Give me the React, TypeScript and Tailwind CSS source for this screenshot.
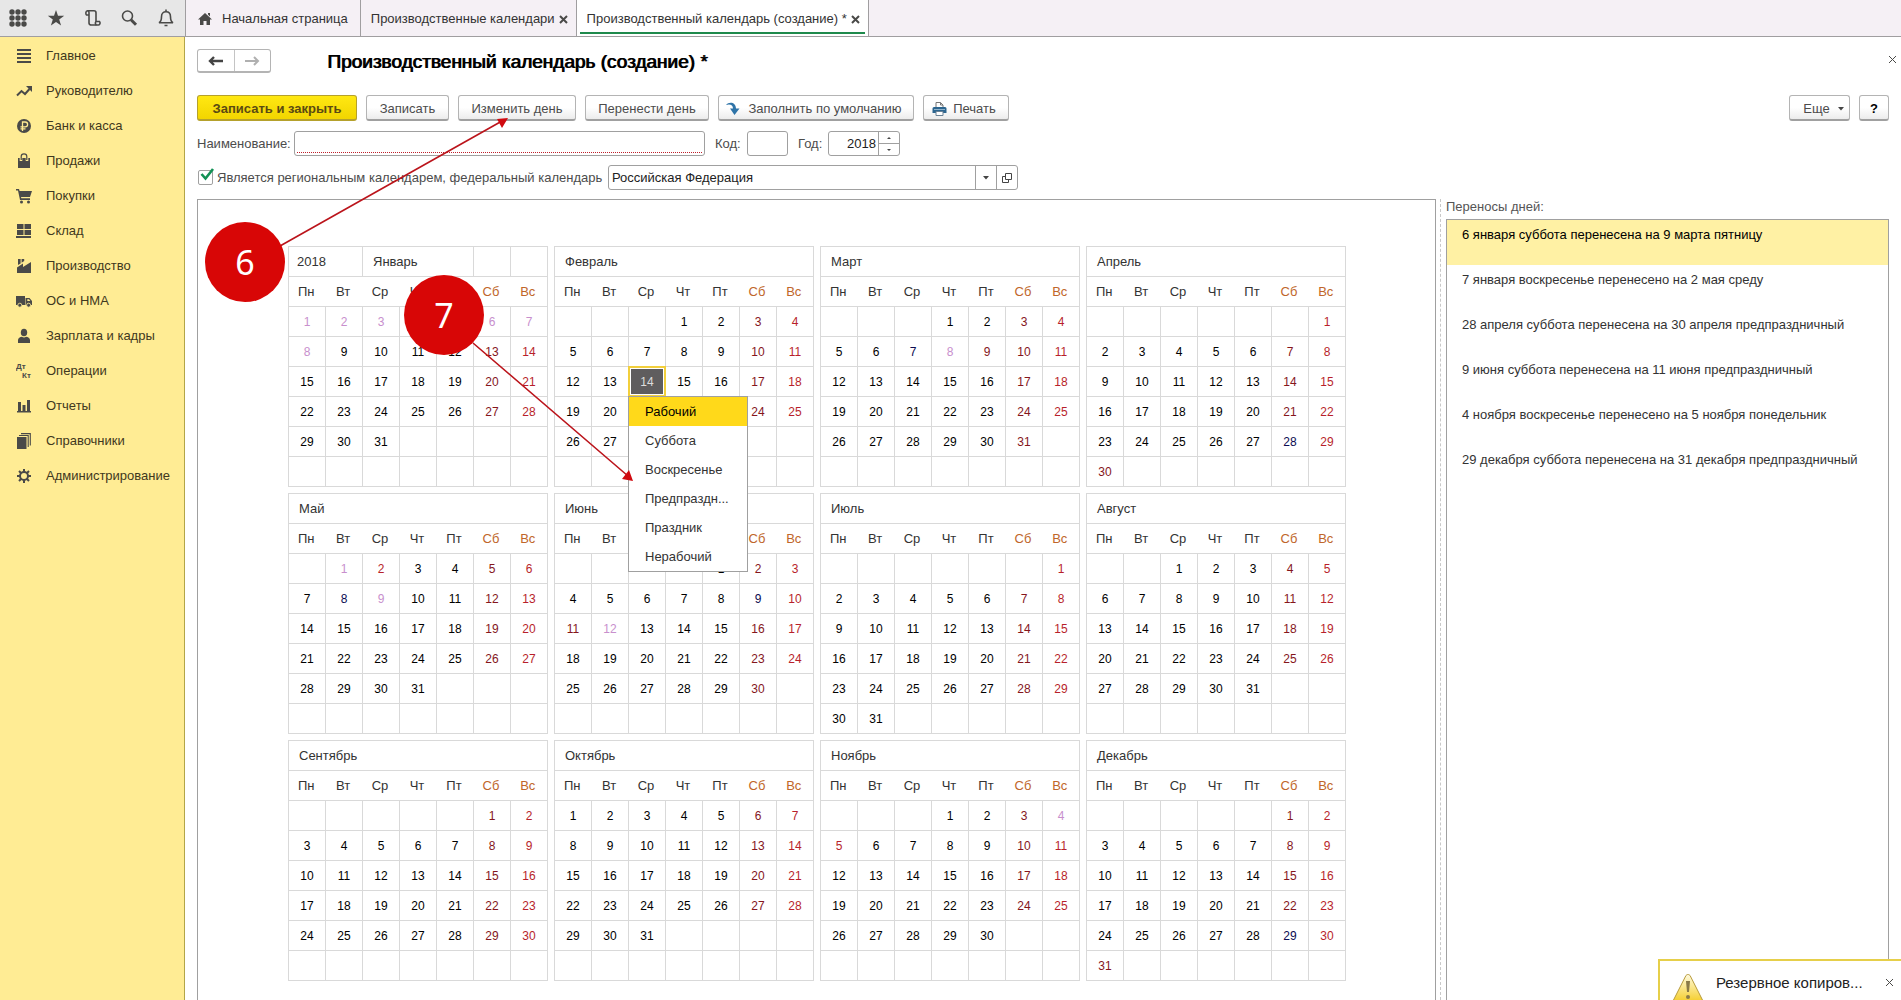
import React from "react";

const dark = "#4a4a48";

const WEEKDAYS = ["Пн", "Вт", "Ср", "Чт", "Пт", "Сб", "Вс"];

type Kind = "work" | "sat" | "sun" | "holiday" | "pre";

const KIND_CLASS: Record<Kind, string> = {
  work: "text-black",
  sat: "text-[#85161c]",
  sun: "text-[#b81f2b]",
  holiday: "text-[#c88fcd]",
  pre: "text-[#0c0c52]",
};

type Month = {
  name: string;
  start: number;
  days: number;
  special?: Record<number, Kind>;
  /** Days that lie under the open day menu and are not painted. */
  covered?: number[];
};

const MONTHS: Month[] = [
  {
    name: "Январь",
    start: 0,
    days: 31,
    special: { 1: "holiday", 2: "holiday", 3: "holiday", 4: "holiday", 5: "holiday", 6: "holiday", 7: "holiday", 8: "holiday" },
  },
  { name: "Февраль", start: 3, days: 28, special: { 22: "pre", 23: "holiday" }, covered: [21, 22, 23, 28] },
  { name: "Март", start: 3, days: 31, special: { 7: "pre", 8: "holiday", 9: "sat" } },
  { name: "Апрель", start: 6, days: 30, special: { 28: "pre", 30: "sat" } },
  { name: "Май", start: 1, days: 31, special: { 1: "holiday", 2: "sun", 8: "pre", 9: "holiday" } },
  { name: "Июнь", start: 4, days: 30, special: { 9: "pre", 11: "sat", 12: "holiday" } },
  { name: "Июль", start: 6, days: 31 },
  { name: "Август", start: 2, days: 31 },
  { name: "Сентябрь", start: 5, days: 30 },
  { name: "Октябрь", start: 0, days: 31 },
  { name: "Ноябрь", start: 3, days: 30, special: { 4: "holiday", 5: "sun" } },
  { name: "Декабрь", start: 5, days: 31, special: { 29: "pre", 31: "sat" } },
];

const TRANSFERS = [
  "6 января суббота перенесена на 9 марта пятницу",
  "7 января воскресенье перенесено на 2 мая среду",
  "28 апреля суббота перенесена на 30 апреля предпраздничный",
  "9 июня суббота перенесена на 11 июня предпраздничный",
  "4 ноября воскресенье перенесено на 5 ноября понедельник",
  "29 декабря суббота перенесена на 31 декабря предпраздничный",
];

const DAY_KINDS = ["Рабочий", "Суббота", "Воскресенье", "Предпраздн...", "Праздник", "Нерабочий"];

function Icon({ children, size = 16 }: { children: React.ReactNode; size?: number }) {
  return (
    <svg width={size} height={size} viewBox="0 0 16 16" fill={dark} aria-hidden="true" className="shrink-0">
      {children}
    </svg>
  );
}

const NAV: { label: string; icon: React.ReactNode }[] = [
  {
    label: "Главное",
    icon: <path d="M1 1h14v2H1zM1 5h14v2H1zM1 9h14v2H1zM1 13h14v2H1z" />,
  },
  {
    label: "Руководителю",
    icon: (
      <>
        <path d="M1 12.500l4.500-4.500 3.500 3 4.500-5" fill="none" stroke={dark} strokeWidth="2" />
        <path d="M10 3h6v6z" />
      </>
    ),
  },
  {
    label: "Банк и касса",
    icon: (
      <>
        <circle cx="8" cy="8" r="7" />
        <path d="M6.500 13V4h2.700a2.400 2.400 0 0 1 0 4.800H4.500M4.500 10.800h5" fill="none" stroke="#ffec94" strokeWidth="1.300" />
      </>
    ),
  },
  {
    label: "Продажи",
    icon: (
      <>
        <path d="M2 5h12v10H2z" />
        <path d="M5 8V3.500a3 2.700 0 0 1 6 0V8" fill="none" stroke="#ffec94" strokeWidth="2.600" />
        <path d="M5.200 7V3.500a2.800 2.600 0 0 1 5.600 0V7" fill="none" stroke={dark} strokeWidth="1.200" />
      </>
    ),
  },
  {
    label: "Покупки",
    icon: (
      <>
        <path d="M0 1h3l.6 2H16l-2 6H5l.3 1.200H14V12H4L2 2.500H0z" />
        <circle cx="5.500" cy="14" r="1.500" />
        <circle cx="12.500" cy="14" r="1.500" />
      </>
    ),
  },
  {
    label: "Склад",
    icon: <path d="M1 1h6.500v5H1zM8.500 1H15v5H8.500zM1 7h6.500v5H1zM8.500 7H15v5H8.500zM0 13h15v2H0z" />,
  },
  {
    label: "Производство",
    icon: (
      <>
        <path d="M1 9.500L7 5.500V9l8-5v11H1z" />
        <path d="M2 1h2.600v4.500L2 7zM5.600 1h2.600v2L5.600 4.800z" />
      </>
    ),
  },
  {
    label: "ОС и НМА",
    icon: (
      <>
        <path d="M0 3h9v9H0zM9.500 5h4L16 8v4H9.500z" />
        <path d="M11.300 6.200h1.700l1.300 1.800h-3z" fill="#ffec94" />
        <circle cx="3.800" cy="12.200" r="2" stroke="#ffec94" strokeWidth=".8" />
        <circle cx="12.600" cy="12.200" r="2" stroke="#ffec94" strokeWidth=".8" />
      </>
    ),
  },
  {
    label: "Зарплата и кадры",
    icon: (
      <>
        <ellipse cx="8" cy="4.500" rx="3.200" ry="3.800" />
        <path d="M2 15v-3c0-2 2-3 4-3.300 1 .9 3 .9 4 0 2 .3 4 1.300 4 3.300v3z" />
      </>
    ),
  },
  {
    label: "Операции",
    icon: (
      <g fontFamily="'Liberation Sans', sans-serif" fontSize="8" fontWeight="bold">
        <text x="0" y="6">Дт</text>
        <text x="6" y="15">Кт</text>
      </g>
    ),
  },
  {
    label: "Отчеты",
    icon: <path d="M2 4h3v9H2zM6.500 7h3v6h-3zM11 2h3v11h-3zM1 13h14v1.500H1z" />,
  },
  {
    label: "Справочники",
    icon: (
      <>
        <path d="M1 4h9.500v12H1z" />
        <path d="M3 2.500h9.200V14M5 .6h9.300V12.500" fill="none" stroke={dark} strokeWidth="1.100" />
      </>
    ),
  },
  {
    label: "Администрирование",
    icon: (
      <>
        <circle cx="8" cy="8" r="4" fill="none" stroke={dark} strokeWidth="2" />
        <path
          d="M8 1v3M8 12v3M1 8h3M12 8h3M3 3l2.200 2.200M10.800 10.800L13 13M13 3l-2.200 2.200M5.200 10.800L3 13"
          stroke={dark}
          strokeWidth="2"
        />
      </>
    ),
  },
];

function CrossIcon({ size = 9, width = 2, color = dark }: { size?: number; width?: number; color?: string }) {
  return (
    <svg width={size} height={size} viewBox="0 0 9 9" aria-hidden="true">
      <path d="M1 1l7 7M8 1l-7 7" stroke={color} strokeWidth={width} />
    </svg>
  );
}

function Sidebar() {
  return (
    <nav className="w-[185px] shrink-0 border-r border-[#b3a548] bg-[#ffec94]">
      <ul className="pt-px">
        {NAV.map((item) => (
          <li key={item.label}>
            <a href="#" className="flex h-[35px] items-center gap-3.5 pl-4 text-[13px] text-[#3f3820]">
              <Icon>{item.icon}</Icon>
              {item.label}
            </a>
          </li>
        ))}
      </ul>
    </nav>
  );
}

function TopBar() {
  return (
    <header className="flex h-[37px] shrink-0 border-b border-[#a09ea0] bg-[#f5f0f5] text-[13px] text-[#333]">
      <div className="flex w-[186px] shrink-0 items-center justify-between border-r border-[#a09ea0] bg-[#e7e7e7] pr-2.5 pl-2">
        <button type="button" aria-label="Меню функций" className="p-px">
          <svg width="18" height="18" viewBox="0 0 18 18" fill={dark}>
            {[3, 9, 15].map((y) => [3, 9, 15].map((x) => <circle key={x + "-" + y} cx={x} cy={y} r="2.700" />))}
          </svg>
        </button>
        <button type="button" aria-label="Избранное">
          <svg width="18" height="18" viewBox="0 0 18 18" fill={dark}>
            <path d="M9 1l2 5.800h6.200l-5 3.700 1.900 6L9 12.900l-5.100 3.600 1.900-6-5-3.700H7z" />
          </svg>
        </button>
        <button type="button" aria-label="История">
          <svg width="18" height="18" viewBox="0 0 18 18" fill="none" stroke={dark} strokeWidth="1.600">
            <path d="M5 6H2.500C1.500 5 1.500 2 3.500 1.800H10c1.500 0 2 .8 2 2V12.500h3.500c1 1 .6 3.500-1 3.500H7.500C6 16 5 15.300 5 14V3.500C5 2.500 4.500 2 3.500 1.800" />
            <path d="M12 12.500c-1 1-.8 3 .5 3.500" />
          </svg>
        </button>
        <button type="button" aria-label="Поиск">
          <svg width="18" height="18" viewBox="0 0 18 18" fill="none" stroke={dark}>
            <circle cx="7.500" cy="7" r="5" strokeWidth="1.600" />
            <path d="M11 10.800l5 5" strokeWidth="3" />
          </svg>
        </button>
        <button type="button" aria-label="Уведомления">
          <svg width="18" height="18" viewBox="0 0 18 18" fill="none" stroke={dark} strokeWidth="1.600">
            <path d="M2 13.800c2-1 2.500-3 2.500-6 0-3.500 2-5 4.500-5s4.500 1.500 4.500 5c0 3 .5 5 2.500 6z" />
            <path d="M9 .5v2M7.500 16.500h3" />
          </svg>
        </button>
      </div>
      <div className="flex items-center border-r border-[#a09ea0] pt-0.5 pr-3 pl-3">
        <a href="#" className="flex items-center gap-2.5">
          <svg width="14" height="13" viewBox="0 0 14 13" fill={dark} aria-hidden="true">
            <path d="M7 0l7 6.500h-2V12H8.500V8h-3v4H2V6.500H0zM10 0h2v3.500l-2-2z" />
          </svg>
          Начальная страница
        </a>
      </div>
      <div className="flex items-center gap-1 border-r border-[#a09ea0] pt-0.5 pr-2 pl-2.5">
        <a href="#">Производственные календари</a>
        <button type="button" aria-label="Закрыть вкладку">
          <CrossIcon />
        </button>
      </div>
      <div className="relative flex items-center gap-1 border-r border-[#a09ea0] bg-white pt-0.5 pr-2 pl-2.5">
        <a href="#">Производственный календарь (создание) *</a>
        <button type="button" aria-label="Закрыть вкладку">
          <CrossIcon />
        </button>
        <span className="absolute inset-x-[3px] bottom-[2px] h-[2px] bg-[#1f8a4c]" />
      </div>
    </header>
  );
}

function ToolButton({ children, className = "" }: { children: React.ReactNode; className?: string }) {
  return (
    <button
      type="button"
      className={
        "flex h-[26px] items-center justify-center rounded-[3px] border border-b-2 border-[#b4b4b4] border-b-[#a0a0a0] bg-linear-to-b from-white from-50% to-[#ececec] pt-0.5 text-[13px] whitespace-nowrap text-[#4c4c4c] " +
        className
      }
    >
      {children}
    </button>
  );
}

function Toolbar() {
  return (
    <div className="mt-[22px] flex gap-[9px]">
      <button
        type="button"
        className="h-[26px] w-[160px] rounded-[3px] border border-b-2 border-[#b5a12c] bg-linear-to-b from-[#ffe812] to-[#f2d500] pt-0.5 text-[13px] font-bold whitespace-nowrap text-[#5a4a12]"
      >
        Записать и закрыть
      </button>
      <ToolButton className="w-[83px]">Записать</ToolButton>
      <ToolButton className="w-[118px]">Изменить день</ToolButton>
      <ToolButton className="w-[124px]">Перенести день</ToolButton>
      <ToolButton className="w-[196px] gap-2 pr-1">
        <svg width="14" height="14" viewBox="0 0 14 14" fill="#2f74a8" aria-hidden="true">
          <path d="M0 3C3-1 10 0 10 6.500h3.500L8.500 13 4 6.500h3C7 3 4 1.500 0 3z" />
        </svg>
        Заполнить по умолчанию
      </ToolButton>
      <ToolButton className="w-[86px] gap-1.5 pr-1">
        <svg width="15" height="14" viewBox="0 0 15 14" aria-hidden="true">
          <path d="M4 6V.500h4.500L11 3v3" fill="#fff" stroke="#777" />
          <path d="M8.500.500V3H11" fill="none" stroke="#777" />
          <path d="M2 5h11a1.500 1.500 0 0 1 1.500 1.500V11H.500V6.500A1.500 1.500 0 0 1 2 5z" fill="#2d6690" />
          <path d="M2 7.500h11" stroke="#8fb3cc" />
          <path d="M4 9.500h7v4H4z" fill="#fff" stroke="#6a8296" />
        </svg>
        Печать
      </ToolButton>
      <ToolButton className="ml-auto w-[61px] gap-2 pl-2">
        Еще
        <svg width="6" height="4" viewBox="0 0 6 4" fill="#444" aria-hidden="true">
          <path d="M0 0h6L3 3.500z" />
        </svg>
      </ToolButton>
      <ToolButton className="w-[30px] font-bold text-black">?</ToolButton>
    </div>
  );
}

const FIELD = "h-[25px] rounded-[3px] border border-[#a0a0a0] bg-white text-[13px] text-[#222]";

function Fields() {
  return (
    <>
      <div className="mt-2.5 flex items-center text-[13px] text-[#4c4c4c]">
        <label htmlFor="name" className="w-[97px]">
          Наименование:
        </label>
        <div className={"flex w-[411px] flex-col px-0.5 pb-0.5 " + FIELD}>
          <input id="name" className="w-full flex-1 border-b border-dotted border-[#c0202c] px-1 outline-none" />
        </div>
        <label htmlFor="code" className="ml-2.5 w-8">
          Код:
        </label>
        <input id="code" className={"w-[41px] px-1 " + FIELD} />
        <label htmlFor="year" className="ml-2.5 w-[30px]">
          Год:
        </label>
        <div className={"flex w-[72px] " + FIELD}>
          <input id="year" defaultValue="2018" className="w-[49px] pr-0.5 text-right outline-none" />
          <div className="flex flex-1 flex-col border-l border-[#a0a0a0]">
            <button type="button" aria-label="Больше" className="flex flex-1 items-center justify-center border-b border-[#a0a0a0]">
              <svg width="4" height="2" viewBox="0 0 4 2" fill="#444">
                <path d="M2 0l2 2H0z" />
              </svg>
            </button>
            <button type="button" aria-label="Меньше" className="flex flex-1 items-center justify-center">
              <svg width="4" height="2" viewBox="0 0 4 2" fill="#444">
                <path d="M0 0h4L2 2z" />
              </svg>
            </button>
          </div>
        </div>
      </div>

      <div className="mt-[9px] flex items-center text-[13px] text-[#4c4c4c]">
        <label className="flex w-[411px] items-center gap-1 whitespace-nowrap">
          <span className="relative ml-px flex">
            <input
              type="checkbox"
              defaultChecked
              className="peer size-[15px] appearance-none rounded-[2px] border border-[#a0a0a0] bg-white"
            />
            <svg
              width="15"
              height="14"
              viewBox="0 0 15 14"
              fill="none"
              stroke="#139155"
              strokeWidth="2.600"
              className="pointer-events-none absolute -top-0.5 left-0.5 hidden peer-checked:block"
            >
              <path d="M1.500 6l4 4.500L13 1" />
            </svg>
          </span>
          Является региональным календарем, федеральный календарь
        </label>
        <div className={"flex w-[410px] " + FIELD}>
          <select aria-label="Федеральный календарь" className="min-w-0 flex-1 appearance-none px-[3px] outline-none">
            <option>Российская Федерация</option>
          </select>
          <button type="button" aria-label="Выбрать" className="flex w-[21px] items-center justify-center border-l border-[#a0a0a0]">
            <svg width="6" height="4" viewBox="0 0 6 4" fill="#444">
              <path d="M0 0h6L3 3.500z" />
            </svg>
          </button>
          <button type="button" aria-label="Открыть" className="flex w-[21px] items-center justify-center border-l border-[#a0a0a0]">
            <svg width="10" height="10" viewBox="0 0 10 10" fill="none" stroke="#444">
              <path d="M3.500.500h6v6h-6z" />
              <path d="M3 3.500H.500v6h6V7" />
            </svg>
          </button>
        </div>
      </div>
    </>
  );
}

function DayMenu() {
  return (
    <div
      role="menu"
      className="absolute top-[29px] -left-px z-10 w-[120px] border border-[#a0a0a0] bg-white text-left text-[13px] text-[#333]"
    >
      {DAY_KINDS.map((kind, i) => (
        <button
          key={kind}
          type="button"
          role="menuitem"
          className={"block h-[29px] w-full pl-4 text-left " + (i === 0 ? "bg-[#ffd91a] text-black" : "")}
        >
          {kind}
        </button>
      ))}
    </div>
  );
}

const LINE = "border-[#d9d9d9]";

function MonthTable({ month }: { month: Month }) {
  const first = month.name === "Январь";
  const rows = Array.from({ length: 6 }, (_, r) => Array.from({ length: 7 }, (_, c) => r * 7 + c - month.start + 1));
  const head = "h-[30px] text-left text-[13px] font-normal text-[#333] border " + LINE;
  return (
    <table className={"w-[260px] table-fixed border-collapse border " + LINE}>
      <thead>
        <tr>
          {first ? (
            <>
              <th colSpan={2} className={head + " pl-2"}>
                2018
              </th>
              <th colSpan={3} className={head + " pl-2.5"}>
                {month.name}
              </th>
              <th className={head} />
              <th className={head} />
            </>
          ) : (
            <th colSpan={7} className={head + " pl-2.5"}>
              {month.name}
            </th>
          )}
        </tr>
        <tr>
          {WEEKDAYS.map((d, i) => (
            <th key={d} className={"h-[30px] pr-0.5 text-center text-[13px] font-normal " + (i > 4 ? "text-[#c0662a]" : "text-[#333]")}>
              {d}
            </th>
          ))}
        </tr>
      </thead>
      <tbody>
        {rows.map((row, r) => (
          <tr key={r}>
            {row.map((day, c) => {
              const valid = day > 0 && day <= month.days && !month.covered?.includes(day);
              const kind: Kind = (valid && month.special?.[day]) || (c === 5 ? "sat" : c === 6 ? "sun" : "work");
              const selected = month.name === "Февраль" && day === 14;
              return (
                <td key={c} className={"relative h-[30px] border p-0 text-center text-[12px] " + LINE + " " + KIND_CLASS[kind]}>
                  {selected ? (
                    <>
                      <div className="absolute -inset-px flex border-2 border-[#f2cf3c] bg-white p-px">
                        <span className="flex flex-1 items-center justify-center bg-[#5f5d5e] text-[#ddd]">14</span>
                      </div>
                      <DayMenu />
                    </>
                  ) : valid ? (
                    day
                  ) : null}
                </td>
              );
            })}
          </tr>
        ))}
      </tbody>
    </table>
  );
}

function Transfers() {
  return (
    <section className="flex w-[443px] shrink-0 flex-col text-[13px]">
      <h2 className="h-5 leading-4 text-[#555]">Переносы дней:</h2>
      <ul className="flex-1 border border-b-0 border-[#a0a0a0] text-[#333]">
        {TRANSFERS.map((t, i) => (
          <li key={t} className={"h-[45px] pt-[5px] pl-[15px] whitespace-nowrap " + (i === 0 ? "bg-[#fff1a4] text-black" : "")}>
            {t}
          </li>
        ))}
      </ul>
    </section>
  );
}

function Notification() {
  return (
    <aside className="absolute right-0 bottom-0 flex h-[41px] w-[243px] overflow-hidden border-t-2 border-l-2 border-[#e6cf4a] bg-white pl-3">
      <svg width="32" height="32" viewBox="0 0 32 32" className="mt-3 shrink-0" aria-hidden="true">
        <defs>
          <linearGradient id="warn" x1="0" y1="0" x2="0" y2="1">
            <stop offset="0" stopColor="#fffbe0" />
            <stop offset="1" stopColor="#f5cf30" />
          </linearGradient>
        </defs>
        <path d="M16 1.500c1 0 1.800.5 2.300 1.500L31 28H1L13.700 3c.5-1 1.300-1.500 2.300-1.500z" fill="url(#warn)" stroke="#b89b3c" />
        <path d="M14 8h4l-1 11h-2z" fill="#8a7a48" />
        <circle cx="16" cy="24" r="2" fill="#8a7a48" />
      </svg>
      <span className="mt-3 ml-3 text-[15px] leading-5 text-[#222]">Резервное копиров...</span>
      <button type="button" aria-label="Закрыть уведомление" className="absolute top-[17px] right-[7px]">
        <CrossIcon width={1} />
      </button>
    </aside>
  );
}

function Callouts() {
  return (
    <div className="pointer-events-none absolute inset-0 z-20 overflow-hidden font-['Noto_Sans',sans-serif] text-[34px] leading-10 text-white">
      <svg width="720" height="500" viewBox="0 0 720 500" className="absolute top-0 left-0" aria-hidden="true">
        <g stroke="#bb141b" strokeWidth="1.600">
          <path d="M280 246L502 121M473 343L628 476" />
        </g>
        <path d="M508 118l-11 1 5 9zM633 481l-4-11-7 9z" fill="#d00a10" />
      </svg>
      <div className="absolute top-[222px] left-[205px] flex size-20 items-center justify-center rounded-full bg-[#d80606]">6</div>
      <div className="absolute top-[275px] left-[404px] flex size-20 items-center justify-center rounded-full bg-[#d80606]">7</div>
    </div>
  );
}

export default function App() {
  return (
    <div className="relative flex h-screen flex-col overflow-hidden bg-white font-['Liberation_Sans',Arial,sans-serif]">
      <TopBar />
      <div className="flex min-h-0 flex-1">
        <Sidebar />
        <main className="flex min-w-0 flex-1 flex-col pt-3 pr-3 pl-3">
          <div className="flex h-6 items-center">
            <div className="flex h-6 w-[74px] rounded-[3px] border border-b-2 border-[#b4b4b4] bg-white">
              <button type="button" aria-label="Назад" className="flex flex-1 items-center justify-center border-r border-[#c4c4c4]">
                <svg width="15" height="10" viewBox="0 0 15 10" fill="none" stroke="#444" strokeWidth="2.400">
                  <path d="M2 5h13M6 1L2 5l4 4" />
                </svg>
              </button>
              <button type="button" aria-label="Вперед" className="flex flex-1 items-center justify-center">
                <svg width="15" height="10" viewBox="0 0 15 10" fill="none" stroke="#b0b0b0" strokeWidth="2">
                  <path d="M0 5h13M9 1l4 4-4 4" />
                </svg>
              </button>
            </div>
            <h1 className="mt-0.5 ml-14 text-[19px] leading-6 text-black [text-shadow:1px_0_0_#000]">
              Производственный календарь (создание) *
            </h1>
            <button type="button" aria-label="Закрыть" className="-mr-2 mb-1 ml-auto">
              <CrossIcon width={1} />
            </button>
          </div>
          <Toolbar />
          <Fields />
          <div className="mt-[9px] flex min-h-0 flex-1">
            <section className="min-w-0 flex-1 border border-b-0 border-[#a0a0a0] pt-[46px] pl-[90px]">
              <div className="grid w-max grid-cols-4 gap-1.5">
                {MONTHS.map((m) => (
                  <MonthTable key={m.name} month={m} />
                ))}
              </div>
            </section>
            <div className="mr-[5px] ml-1 border-l border-dashed border-[#c8c8c8]" />
            <Transfers />
          </div>
        </main>
      </div>
      <Notification />
      <Callouts />
    </div>
  );
}
